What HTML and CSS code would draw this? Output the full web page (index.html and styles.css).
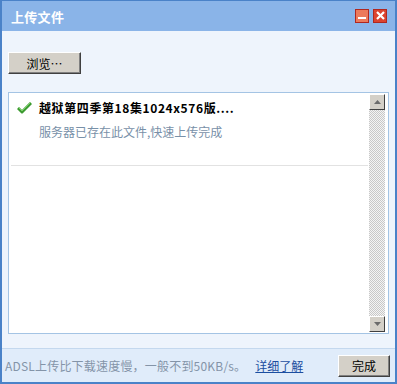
FILE: index.html
```html
<!DOCTYPE html>
<html lang="zh-CN">
<head>
    <meta charset="UTF-8">
    <title>上传文件</title>
    <link rel="stylesheet" href="styles.css">
</head>
<body>
    <div class="window">
        <div class="titlebar">
            <span class="title">上传文件</span>
            <div class="win-btns">
                <span class="win-btn min"><span class="bar"></span></span>
                <span class="win-btn close">
                    <svg width="9" height="9" viewBox="0 0 9 9"><path d="M1 1 L8 8 M8 1 L1 8" stroke="#fff" stroke-width="2.2"/></svg>
                </span>
            </div>
        </div>

        <div class="content">
            <button class="btn browse">浏览…</button>

            <!-- file list -->
            <div class="list">
                <div class="rows">
                    <div class="row">
                        <div class="row-head">
                            <svg class="check" width="15" height="13" viewBox="0 0 15 13">
                                <path d="M1 7 L5 11 L14 2" fill="none" stroke="#3c9a30" stroke-width="3" stroke-linejoin="round"/>
                                <path d="M1.5 6.5 L5 10 L13.5 1.5" fill="none" stroke="#7cd06a" stroke-width="1"/>
                            </svg>
                            <span class="file-name">越狱第四季第18集1024x576版....</span>
                        </div>
                        <div class="file-status">服务器已存在此文件,快速上传完成</div>
                    </div>
                </div>
                <div class="scrollbar">
                    <span class="sb-btn">
                        <svg width="7" height="4" viewBox="0 0 7 4"><path d="M0 4 L3.5 0 L7 4 Z" fill="#6b6b6b"/></svg>
                    </span>
                    <span class="sb-track"></span>
                    <span class="sb-btn">
                        <svg width="7" height="4" viewBox="0 0 7 4"><path d="M0 0 L3.5 4 L7 0 Z" fill="#6b6b6b"/></svg>
                    </span>
                </div>
            </div>
        </div>

        <div class="footer">
            <span class="tip">ADSL上传比下载速度慢，一般不到50KB/s。</span>
            <a class="more" href="#">详细了解</a>
            <button class="btn done">完成</button>
        </div>
    </div>
</body>
</html>
```

FILE: styles.css
```css
body {
    margin: 0;
    font-family: "Noto Sans CJK SC", "Liberation Sans", sans-serif;
    font-size: 12px;
}

.window {
    width: 397px;
    height: 384px;
    box-sizing: border-box;
    border: 1px solid #4a82c8;
    border-left-width: 2px;
    border-right-width: 2px;
    border-bottom-width: 2px;
    background-color: #eef4fc;
    display: flex;
    flex-direction: column;
}

/* Title bar */
.titlebar {
    height: 30px;
    background-color: #8ab4e8;
    display: flex;
    align-items: center;
    justify-content: space-between;
    padding: 0 8px 0 9px;
    flex-shrink: 0;
}

.title {
    color: white;
    font-weight: bold;
    font-size: 13px;
    letter-spacing: 0.3px;
}

.win-btns {
    display: flex;
    gap: 4px;
    margin-top: -1px;
}

.win-btn {
    width: 12px;
    height: 12px;
    border: 1px solid #b02820;
    display: flex;
    align-items: center;
    justify-content: center;
}

.win-btn.min {
    background-color: #ec7a5c;
}

.win-btn.min .bar {
    width: 8px;
    height: 2px;
    background: white;
    margin-top: 5px;
}

.win-btn.close {
    background-color: #dc4430;
}

/* Content */
.content {
    flex: 1;
    padding: 21px 6px 14px 6px;
    display: flex;
    flex-direction: column;
    gap: 18px;
}

.btn {
    font-family: "Noto Sans CJK SC", sans-serif;
    font-size: 12px;
    color: black;
    background-color: #d4d0c8;
    border: 1px solid;
    border-color: #fff #404040 #404040 #fff;
    box-shadow: inset -1px -1px 0 #808080;
    padding: 0;
    cursor: pointer;
}

.browse {
    width: 73px;
    height: 22px;
    align-self: flex-start;
}

.list {
    flex: 1;
    background: white;
    border: 1px solid #a4c4e4;
    display: flex;
}

.rows {
    flex: 1;
    padding: 0 1px 0 2px;
}

.row {
    height: 73px;
    border-bottom: 1px solid #e2e2e2;
    box-sizing: border-box;
    padding: 5px 0 0 6px;
}

.row-head {
    display: flex;
    align-items: center;
    gap: 7px;
    height: 18px;
}

.file-name {
    font-weight: bold;
    color: black;
    letter-spacing: 0.6px;
}

.file-status {
    color: #7890a8;
    margin: 7px 0 0 22px;
}

/* Scrollbar */
.scrollbar {
    width: 17px;
    display: flex;
    flex-direction: column;
    padding: 1px 2px 1px 0;
}

.sb-btn {
    width: 14px;
    height: 14px;
    background-color: #d4d0c8;
    border: 1px solid;
    border-color: #fff #404040 #404040 #fff;
    display: flex;
    align-items: center;
    justify-content: center;
}

.sb-track {
    flex: 1;
    width: 16px;
    background-color: #e4e4e4;
    background-image: repeating-conic-gradient(#c8c8c8 0 25%, #f4f4f4 0 50%);
    background-size: 2px 2px;
}

/* Footer */
.footer {
    height: 33px;
    border-top: 1px solid #c4d8ee;
    background-color: #e0ecfa;
    display: flex;
    align-items: center;
    padding: 0 5px 0 3px;
    flex-shrink: 0;
}

.tip {
    color: #8494a8;
    letter-spacing: 0.2px;
}

.more {
    color: #1c4ea0;
    margin-left: 9px;
}

.done {
    margin-left: auto;
    width: 52px;
    height: 22px;
}
```
